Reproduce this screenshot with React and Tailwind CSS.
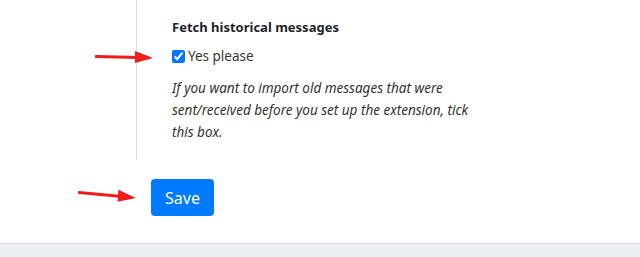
import React, { useState } from "react";

const Arrow = ({ className }) => (
  <svg className={className} width="60" height="16" viewBox="0 0 60 16">
    <path d="M1 7.5 L44 8.5" stroke="#f21b1b" strokeWidth="3" strokeLinecap="round" fill="none" />
    <path d="M40 2 L58 9 L40 14 Z" fill="#f21b1b" />
  </svg>
);

const App = () => {
  const [fetchOld, setFetchOld] = useState(true);

  return (
    <div
      className="relative h-[257px] w-[640px] overflow-hidden bg-white flex flex-col"
      style={{ fontFamily: '"Noto Sans", "Open Sans", sans-serif' }}
    >
      {/* Settings section */}
      <div className="ml-[136px] border-l border-[#dcdcdc] pl-[35px] pt-[17px] pb-[17px]">
        <h3 className="text-[13px] font-bold leading-[21px] text-[#212529]">
          Fetch historical messages
        </h3>
        <label className="mt-[8px] flex items-center gap-[3px] text-[13.5px] leading-[21px] text-[#333]">
          <input
            type="checkbox"
            checked={fetchOld}
            onChange={(e) => setFetchOld(e.target.checked)}
            className="m-0 h-[13px] w-[13px] accent-[#0075ff]"
          />
          Yes please
        </label>
        <p className="mt-[10px] w-[310px] text-[13.5px] italic leading-[22px] text-[#333]">
          If you want to import old messages that were sent/received before you set up the extension, tick this box.
        </p>
      </div>

      {/* Save */}
      <div className="ml-[151px] mt-[19px]">
        <button className="h-[37px] w-[63px] rounded-[4px] bg-[#007bff] text-[16px] text-white">
          Save
        </button>
      </div>

      {/* Footer bar */}
      <div className="mt-auto h-[14px] border-t border-[#d5d9e0] bg-[#eceff4]" />

      {/* Annotation arrows */}
      <Arrow className="absolute left-[95px] top-[49px]" />
      <Arrow className="absolute left-[78px] top-[187px] rotate-[4deg]" />
    </div>
  );
};

export default App;
